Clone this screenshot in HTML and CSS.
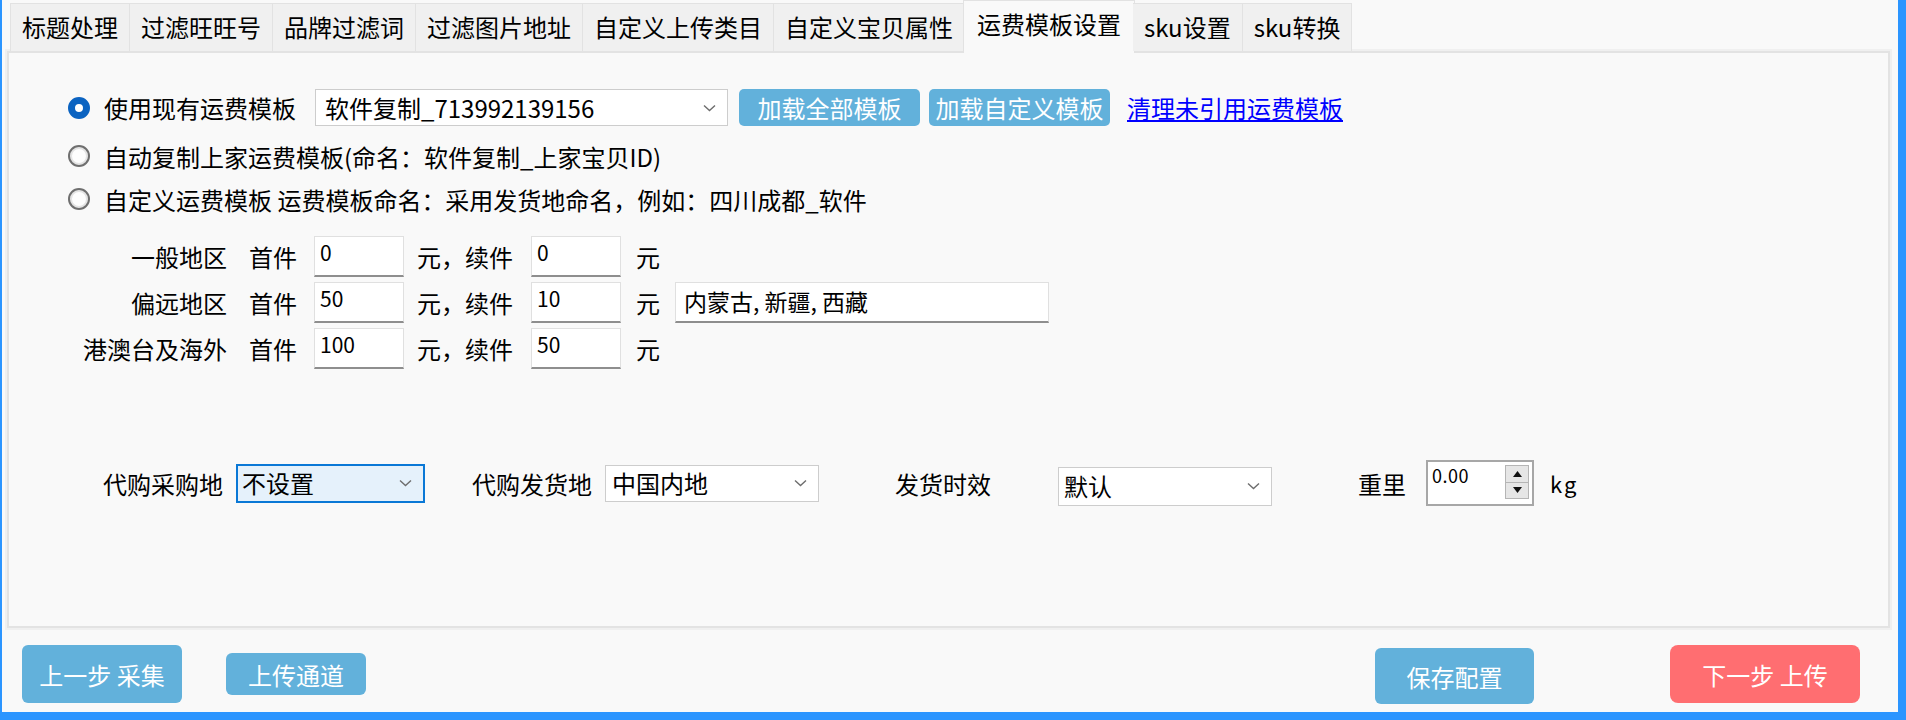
FILE: index.html
```html
<!DOCTYPE html>
<html lang="zh-CN">
<head>
    <meta charset="UTF-8">
    <title>运费模板设置</title>
    <link rel="stylesheet" href="styles.css">
</head>
<body>
<div class="window">
    <div class="tabs">
        <div class="tab">标题处理</div>
        <div class="tab">过滤旺旺号</div>
        <div class="tab">品牌过滤词</div>
        <div class="tab">过滤图片地址</div>
        <div class="tab">自定义上传类目</div>
        <div class="tab">自定义宝贝属性</div>
        <div class="tab active">运费模板设置</div>
        <div class="tab">sku设置</div>
        <div class="tab">sku转换</div>
    </div>

    <div class="panel">
        <div class="opt-row opt-first">
            <input class="radio" type="radio" name="tpl" checked>
            <span class="opt-label w192">使用现有运费模板</span>
            <div class="select select-tpl">
                <span>软件复制_713992139156</span>
                <svg class="chev" width="13" height="8" viewBox="0 0 13 8"><path d="M1 1.5l5.5 5 5.5-5" fill="none" stroke="#6d6d6d" stroke-width="1.4"/></svg>
            </div>
            <button class="btn btn-load">加载全部模板</button>
            <button class="btn btn-load btn-load2">加载自定义模板</button>
            <a class="link" href="#">清理未引用运费模板</a>
        </div>
        <div class="opt-row opt-second">
            <input class="radio" type="radio" name="tpl">
            <span class="opt-label">自动复制上家运费模板(命名：软件复制_上家宝贝ID)</span>
        </div>
        <div class="opt-row opt-third">
            <input class="radio" type="radio" name="tpl">
            <span class="opt-label">自定义运费模板 运费模板命名：采用发货地命名，例如：四川成都_软件</span>
        </div>

        <div class="fees">
            <span class="fee-name">一般地区</span>
            <span class="fee-txt">首件</span>
            <input class="field" type="text" value="0">
            <span class="fee-txt2">元，续件</span>
            <input class="field" type="text" value="0">
            <span class="fee-unit">元</span>
            <span></span>

            <span class="fee-name">偏远地区</span>
            <span class="fee-txt">首件</span>
            <input class="field" type="text" value="50">
            <span class="fee-txt2">元，续件</span>
            <input class="field" type="text" value="10">
            <span class="fee-unit">元</span>
            <input class="field field-area" type="text" value="内蒙古, 新疆, 西藏">

            <span class="fee-name">港澳台及海外</span>
            <span class="fee-txt">首件</span>
            <input class="field" type="text" value="100">
            <span class="fee-txt2">元，续件</span>
            <input class="field" type="text" value="50">
            <span class="fee-unit">元</span>
            <span></span>
        </div>

        <div class="extra">
            <span class="ex-label ex-buy">代购采购地</span>
            <div class="select select-buy focused">
                <span>不设置</span>
                <svg class="chev" width="13" height="8" viewBox="0 0 13 8"><path d="M1 1.5l5.5 5 5.5-5" fill="none" stroke="#6d6d6d" stroke-width="1.4"/></svg>
            </div>
            <span class="ex-label ex-ship">代购发货地</span>
            <div class="select select-ship">
                <span>中国内地</span>
                <svg class="chev" width="13" height="8" viewBox="0 0 13 8"><path d="M1 1.5l5.5 5 5.5-5" fill="none" stroke="#6d6d6d" stroke-width="1.4"/></svg>
            </div>
            <span class="ex-label ex-time">发货时效</span>
            <div class="select select-time">
                <span>默认</span>
                <svg class="chev" width="13" height="8" viewBox="0 0 13 8"><path d="M1 1.5l5.5 5 5.5-5" fill="none" stroke="#6d6d6d" stroke-width="1.4"/></svg>
            </div>
            <span class="ex-label ex-weight">重里</span>
            <div class="spin">
                <span class="spin-val">0.00</span>
                <div class="spin-btns">
                    <span class="spin-btn"><svg width="9" height="6" viewBox="0 0 9 6"><path d="M0 6L4.5 0 9 6z" fill="#111"/></svg></span>
                    <span class="spin-btn"><svg width="9" height="6" viewBox="0 0 9 6"><path d="M0 0L4.5 6 9 0z" fill="#111"/></svg></span>
                </div>
            </div>
            <span class="unit-kg">kg</span>
        </div>
    </div>

    <div class="footer">
        <button class="btn btn-prev">上一步 采集</button>
        <button class="btn btn-channel">上传通道</button>
        <button class="btn btn-save">保存配置</button>
        <button class="btn btn-next">下一步 上传</button>
    </div>
</div>
</body>
</html>
```

FILE: styles.css
```css
* {
    box-sizing: border-box;
}
body {
    margin: 0;
    font-family: "Noto Sans CJK SC", "Noto Sans", sans-serif;
    font-size: 24px;
    color: #000;
    background: #2b95ff;
}
.window {
    width: 1906px;
    height: 720px;
    display: flex;
    flex-direction: column;
    background: #f9f9f9;
    border-left: 2px solid #2b95ff;
    border-right: 8px solid #2b95ff;
    border-bottom: 8px solid #2b95ff;
}

/* tabs */
.tabs {
    display: flex;
    align-items: flex-start;
    height: 51px;
    flex-shrink: 0;
    padding-left: 8px;
    position: relative;
    z-index: 1;
}
.tab {
    margin-top: 3px;
    height: 48px;
    line-height: 45px;
    padding: 0 11px;
    white-space: nowrap;
    background: #f0f0f0;
    border-top: 1px solid #e2e2e2;
    border-right: 1px solid #e2e2e2;
}
.tab:first-child {
    border-left: 1px solid #e2e2e2;
}
.tab.active {
    margin: 0 -2px -2px -2px;
    height: 53px;
    line-height: 46px;
    padding: 0 13px;
    background: #f9f9f9;
    border-left: 1px solid #e2e2e2;
}

/* panel */
.panel {
    flex: 1;
    margin: 0 8px 0 5px;
    padding-top: 36px;
    background: #f9f9f9;
    border: 2px solid #e3e3e3;
    box-shadow: 0 0 0 2px #f0f0f0;
}
.opt-row {
    display: flex;
    align-items: center;
    padding-left: 59px;
}
.opt-first {
    height: 37px;
}
.opt-second {
    height: 30px;
    margin-top: 15px;
}
.opt-third {
    height: 30px;
    margin-top: 13px;
}
.radio {
    appearance: none;
    -webkit-appearance: none;
    margin: 0;
    width: 22px;
    height: 22px;
    flex-shrink: 0;
    border-radius: 50%;
    border: 2px solid #6f6f6f;
    background: #fdfdfd;
    box-shadow: inset 0 0 0 2px #e4e4e4;
}
.radio:checked {
    border: 7px solid #0b63c1;
    background: #fff;
    box-shadow: none;
}
.opt-label {
    margin-left: 14px;
    white-space: nowrap;
}
.w192 {
    width: 192px;
}

.select {
    display: flex;
    align-items: center;
    justify-content: space-between;
    background: #fff;
    border: 1px solid #cdcdcd;
    padding: 0 11px 0 9px;
    white-space: nowrap;
}
.select span {
    line-height: 1;
}
.chev {
    flex-shrink: 0;
}
.select-tpl {
    margin-left: 19px;
    width: 413px;
    height: 37px;
}

.btn {
    border: none;
    font-family: inherit;
    font-size: 24px;
    color: #fff;
    background: #62b1db;
    border-radius: 5px;
    padding: 0;
    cursor: pointer;
}
.btn-load {
    margin-left: 11px;
    width: 181px;
    height: 37px;
}
.btn-load2 {
    margin-left: 9px;
}
.link {
    margin-left: 17px;
    color: #0000ff;
    text-decoration: underline;
    white-space: nowrap;
}

/* fee grid */
.fees {
    display: grid;
    grid-template-columns: 218px 87px 90px 127px 90px 54px 374px;
    grid-auto-rows: 41px;
    row-gap: 5px;
    align-items: center;
    margin-top: 22px;
}
.fee-name {
    text-align: right;
    white-space: nowrap;
}
.fee-txt {
    padding-left: 22px;
}
.fee-txt2 {
    padding-left: 13px;
    white-space: nowrap;
}
.fee-unit {
    padding-left: 15px;
}
.field {
    width: 90px;
    height: 41px;
    margin: 0;
    padding: 0 4px 8px 5px;
    font-family: inherit;
    font-size: 21px;
    color: #000;
    background: #fff;
    border: 1px solid #e0e0e0;
    border-bottom: 2px solid #8e8e8e;
    outline: none;
}
.field-area {
    width: 374px;
    padding: 0 8px 2px 8px;
    font-size: 23px;
}

/* extra options */
.extra {
    display: flex;
    align-items: center;
    height: 46px;
    margin-top: 91px;
    white-space: nowrap;
}
.ex-buy {
    margin-left: 94px;
    width: 120px;
}
.select-buy {
    margin-left: 13px;
    width: 189px;
    height: 39px;
}
.select.focused {
    background: #e5f1fb;
    border: 2px solid #0a78d6;
    padding-left: 4px;
}
.ex-ship {
    margin-left: 47px;
    width: 120px;
}
.select-ship {
    margin-left: 13px;
    width: 214px;
    height: 37px;
    padding-left: 6px;
}
.ex-time {
    margin-left: 76px;
    width: 96px;
}
.select-time {
    margin-left: 67px;
    margin-top: 6px;
    width: 214px;
    height: 39px;
    padding-left: 5px;
}
.ex-weight {
    margin-left: 86px;
    width: 48px;
}
.spin {
    display: flex;
    justify-content: space-between;
    margin-left: 20px;
    width: 108px;
    height: 46px;
    background: #fff;
    border: 2px solid #a7a7a7;
    padding: 3px 3px 0 4px;
}
.spin-val {
    font-size: 18px;
    line-height: 20px;
    letter-spacing: 0.5px;
}
.spin-btns {
    display: flex;
    flex-direction: column;
    width: 24px;
    height: 34px;
}
.spin-btn {
    flex: 1;
    display: flex;
    align-items: center;
    justify-content: center;
    background: #e6e6e6;
    border: 1px solid #b5b5b5;
}
.spin-btn + .spin-btn {
    border-top: none;
}
.unit-kg {
    margin-left: 16px;
    font-size: 22px;
    letter-spacing: 2px;
}

/* footer */
.footer {
    display: flex;
    align-items: center;
    height: 84px;
    flex-shrink: 0;
    padding: 8px 38px 0 20px;
}
.btn-prev {
    width: 160px;
    height: 58px;
    border-radius: 6px;
}
.btn-channel {
    margin-left: 44px;
    width: 140px;
    height: 42px;
    border-radius: 6px;
}
.btn-save {
    margin-left: auto;
    margin-right: 136px;
    margin-top: 4px;
    width: 159px;
    height: 56px;
    border-radius: 6px;
}
.btn-next {
    width: 190px;
    height: 58px;
    border-radius: 8px;
    background: #ff6e71;
}
```
